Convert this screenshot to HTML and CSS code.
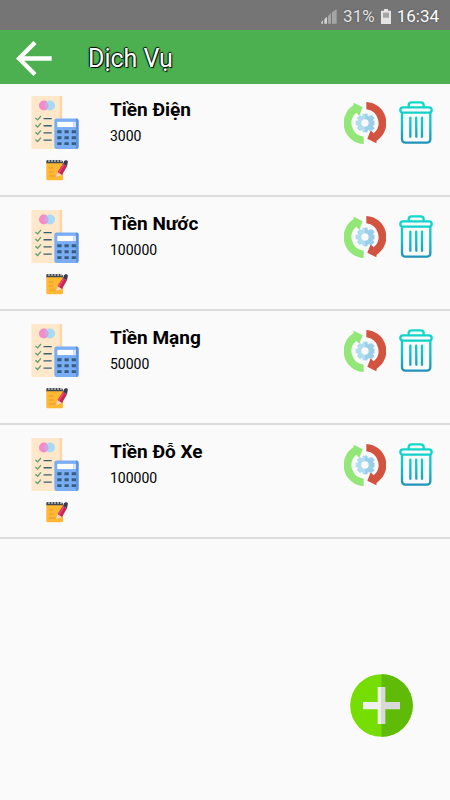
FILE: index.html
```html
<!DOCTYPE html>
<html lang="vi">
<head>
<meta charset="utf-8">
<meta name="viewport" content="width=device-width, initial-scale=1">
<title>Dịch Vụ</title>
<link rel="stylesheet" href="styles.css">
</head>
<body>
<svg class="sprite" aria-hidden="true">
  <defs>
    <linearGradient id="teal" gradientUnits="userSpaceOnUse" x1="0" y1="27" x2="0" y2="156">
      <stop offset="0" stop-color="#12dcc8"/><stop offset=".55" stop-color="#10c4cc"/><stop offset="1" stop-color="#2190b8"/>
    </linearGradient>
  </defs>
  <symbol id="bill" viewBox="0 0 144 162">
    <path fill="#ffe8ca" d="M0 0H93V162H0z"/>
    <path fill="#fbd6a8" d="M86 0h8v162h-8z"/>
    <circle cx="38" cy="29" r="15" fill="#f58bc9"/>
    <circle cx="57" cy="29" r="15" fill="#a6dbf6"/>
    <path fill="#cba7e2" d="M47 18a15 15 0 0 1 0 23a15 15 0 0 1 0-23z"/>
    <g fill="none" stroke="#5c9f78" stroke-width="4"><path d="M12 67l7 6 10-12M12 89l7 6 10-12M12 111l7 6 10-12M12 133l7 6 10-12"/></g>
    <path fill="none" stroke="#375f70" stroke-width="4" d="M37 69h25M37 91h25M37 113h25M37 135h25"/>
    <rect x="70" y="69" width="74" height="93" rx="7" fill="#79adf4"/>
    <path fill="#5c94e3" d="M136 69h1a7 7 0 0 1 7 7v79a7 7 0 0 1-7 7h-1z"/>
    <path fill="#fff" d="M79 79h49v16H79z"/><path fill="#dbe6fa" d="M128 79h8v16h-8z"/>
    <g fill="#355d80"><path d="M79 105h13v9H79zM101 105h13v9h-13zM123 105h13v9h-13zM79 123h13v9H79zM101 123h13v9h-13zM123 123h13v9h-13zM79 141h13v9H79zM101 141h13v9h-13zM123 141h13v9h-13z"/></g>
  </symbol>
  <symbol id="edit" viewBox="0 0 66 66">
    <rect x="1" y="7" width="50" height="57" rx="4" fill="#ffb831"/>
    <path fill="#41484f" d="M1 13V7q0-4 4-4h38q8 0 8 8v2z"/>
    <path stroke="#f2f4f5" stroke-width="3" d="M9 0v9M18 0v9M27 0v9M36 0v9M45 0v9"/>
    <path stroke="#e8963a" stroke-width="3" d="M9 27h13M9 39h13M9 51h20"/>
    <path fill="#f6d5cd" d="M30 54l5-15 13 9z"/>
    <path fill="#c52752" d="M35 39L51 15l12 7-15 26z"/>
    <path fill="#e04372" d="M35 39l16-24 5 3-15 25z"/>
    <path fill="#3d3852" d="M51 15l3-8q3-4 8-3t3 7l-2 11z"/>
  </symbol>
  <symbol id="cycle" viewBox="27 27 126 126">
    <path fill="#93e778" d="M86 153V131A41 41 0 0 1 64 59L73 68L83 43L56 29L55 37A63 63 0 0 0 86 153z"/>
    <path fill="#d25340" d="M94 27V49A41 41 0 0 1 116 121L107 112L97 137L124 151L125 143A63 63 0 0 0 94 27z"/>
    <g fill="#afdcf0">
      <circle cx="90" cy="90" r="23"/>
      <path d="M83 62h14v56H83zM62 83h56v14H62z"/>
      <path d="M83 62h14v56H83zM62 83h56v14H62z" transform="rotate(45 90 90)"/>
    </g>
    <path fill="#99cfe8" d="M90 62h7v7l8 2 5-5 9 9-5 6 1 2h3v14h-3l-1 3 5 6-9 8-6-4-7 3v5h-7z"/>
    <circle cx="90" cy="90" r="11" fill="#fafafa"/>
  </symbol>
  <symbol id="trash" viewBox="27 27 102 129">
    <g fill="none" stroke="url(#teal)" stroke-width="7" stroke-linecap="round" stroke-linejoin="round">
      <path d="M56 45V40Q56 31 65 31H92Q101 31 101 40V45"/>
      <rect x="31" y="46" width="94" height="16" rx="8"/>
      <path d="M36 64V141Q36 152 47 152H110Q121 152 121 141V64"/>
      <path d="M61 77V134M78.500 77L79 134M96 77V134"/>
    </g>
  </symbol>
</svg>

<div class="status">
  <svg class="signal" viewBox="0 0 48 45" aria-hidden="true"><path fill="#d3d3d3" d="M1 44v-5l5-5v10zM10 44V31l8-8v21z"/><path fill="#b5b5b5" d="M21 44V21l9-9v32zM33 44V10l14-9v43z" opacity=".75"/></svg>
  <span class="charge">31%</span>
  <svg class="battery" viewBox="0 0 30 45" aria-hidden="true"><path fill="#e4e4e4" d="M9 0h12v5h9v40H0V5h9z"/><path fill="#a4a4a4" d="M6 11h18v15H6z"/></svg>
  <time>16:34</time>
</div>

<header class="bar">
  <button class="icon-button" aria-label="Quay lại">
    <svg class="back" viewBox="0 0 108 104" aria-hidden="true"><path fill="none" stroke="#fff" stroke-width="13" d="M57 4L9 52l48 48M9 52h98"/></svg>
  </button>
  <h1>Dịch Vụ</h1>
</header>

<main>
  <ul class="services">
    <li class="service">
      <div class="lead">
        <svg class="bill" aria-hidden="true"><use href="#bill"/></svg>
        <button class="icon-button" aria-label="Sửa Tiền Điện"><svg class="edit"><use href="#edit"/></svg></button>
      </div>
      <div class="info"><h2>Tiền Điện</h2><p>3000</p></div>
      <div class="actions">
        <button class="icon-button" aria-label="Cập nhật Tiền Điện"><svg class="cycle"><use href="#cycle"/></svg></button>
        <button class="icon-button" aria-label="Xóa Tiền Điện"><svg class="trash"><use href="#trash"/></svg></button>
      </div>
    </li>
    <li class="service">
      <div class="lead">
        <svg class="bill" aria-hidden="true"><use href="#bill"/></svg>
        <button class="icon-button" aria-label="Sửa Tiền Nước"><svg class="edit"><use href="#edit"/></svg></button>
      </div>
      <div class="info"><h2>Tiền Nước</h2><p>100000</p></div>
      <div class="actions">
        <button class="icon-button" aria-label="Cập nhật Tiền Nước"><svg class="cycle"><use href="#cycle"/></svg></button>
        <button class="icon-button" aria-label="Xóa Tiền Nước"><svg class="trash"><use href="#trash"/></svg></button>
      </div>
    </li>
    <li class="service">
      <div class="lead">
        <svg class="bill" aria-hidden="true"><use href="#bill"/></svg>
        <button class="icon-button" aria-label="Sửa Tiền Mạng"><svg class="edit"><use href="#edit"/></svg></button>
      </div>
      <div class="info"><h2>Tiền Mạng</h2><p>50000</p></div>
      <div class="actions">
        <button class="icon-button" aria-label="Cập nhật Tiền Mạng"><svg class="cycle"><use href="#cycle"/></svg></button>
        <button class="icon-button" aria-label="Xóa Tiền Mạng"><svg class="trash"><use href="#trash"/></svg></button>
      </div>
    </li>
    <li class="service">
      <div class="lead">
        <svg class="bill" aria-hidden="true"><use href="#bill"/></svg>
        <button class="icon-button" aria-label="Sửa Tiền Đỗ Xe"><svg class="edit"><use href="#edit"/></svg></button>
      </div>
      <div class="info"><h2>Tiền Đỗ Xe</h2><p>100000</p></div>
      <div class="actions">
        <button class="icon-button" aria-label="Cập nhật Tiền Đỗ Xe"><svg class="cycle"><use href="#cycle"/></svg></button>
        <button class="icon-button" aria-label="Xóa Tiền Đỗ Xe"><svg class="trash"><use href="#trash"/></svg></button>
      </div>
    </li>
  </ul>
</main>

<button class="icon-button add" aria-label="Thêm dịch vụ">
  <svg viewBox="0 0 189 189" aria-hidden="true">
    <circle cx="94.5" cy="94.5" r="94" fill="#76dd00"/>
    <path fill="#60ba08" d="M94.5 .5a94 94 0 0 1 0 188z"/>
    <path fill="#f0f0f0" d="M83 39h12v111H83V106H39V84h44z"/>
    <path fill="#d9d9da" d="M94.500 39H106v45h44v22h-44v44H94.500z"/>
  </svg>
</button>
</body>
</html>
```

FILE: styles.css
```css
* {
  box-sizing: border-box;
}

body {
  margin: 0;
  min-height: 100vh;
  background: #fafafa;
  color: #000;
  font-family: Roboto, sans-serif;
}

h1,
h2,
p,
ul {
  margin: 0;
  padding: 0;
}

svg {
  display: block;
}

.sprite {
  position: absolute;
  width: 0;
  height: 0;
}

.icon-button {
  display: block;
  padding: 0;
  border: 0;
  background: none;
  cursor: pointer;
}

.status {
  display: flex;
  align-items: center;
  justify-content: flex-end;
  gap: 6px;
  height: 30px;
  padding: 2px 11px 0 0;
  background: #757575;
  color: #fff;
  font-size: 17px;
  line-height: 28px;
  text-shadow: 0 0 2px #444;
}

.charge {
  color: #e4e4e4;
}

.signal {
  width: 16px;
  height: 15px;
}

.battery {
  width: 10px;
  height: 15px;
}

.bar {
  display: flex;
  align-items: center;
  gap: 36px;
  padding: 2px 16px 0;
  height: 54px;
  background: #4caf50;
}

.back {
  width: 36px;
  height: 35px;
}

.bar h1 {
  padding-top: 2px;
  color: #fff;
  font-size: 25px;
  font-weight: 400;
  line-height: 32px;
  text-shadow: 1px 1px 1px #000, -1px 0 1px #000, 0 -1px 1px #000;
}

.services {
  list-style: none;
}

.service {
  display: flex;
  align-items: flex-start;
  padding: 12px 17px 14px 30px;
  border-bottom: 2px solid #dcdcdc;
}

.service + .service {
  padding-top: 13px;
}

.lead {
  display: flex;
  flex-direction: column;
  align-items: center;
  gap: 10px;
  width: 50px;
}

.lead .icon-button {
  padding-left: 4px;
}

.bill {
  width: 48px;
  height: 53px;
}

.edit {
  width: 22px;
  height: 22px;
}

.info {
  flex: 1;
  padding-left: 30px;
}

.info h2 {
  font-size: 19px;
  font-weight: 700;
  line-height: 28px;
}

.info p {
  font-size: 14px;
  line-height: 24px;
}

.actions {
  display: flex;
  gap: 13px;
  padding-top: 5px;
}

.cycle {
  width: 42px;
  height: 42px;
}

.trash {
  width: 34px;
  height: 43px;
}

.add {
  position: fixed;
  right: 37px;
  bottom: 63px;
}

.add svg {
  width: 63px;
  height: 63px;
}
```
